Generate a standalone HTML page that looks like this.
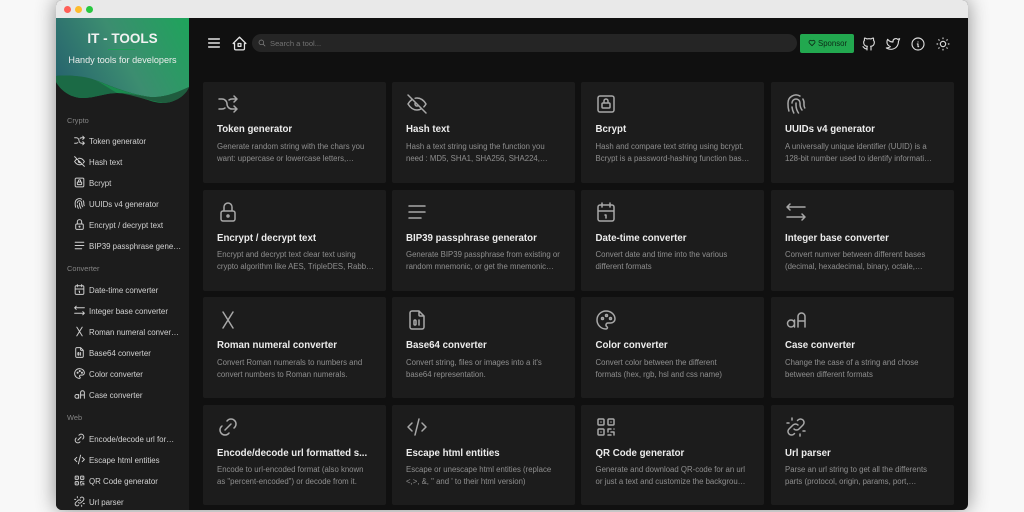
<!DOCTYPE html>
<html lang="en"><head><meta charset="utf-8"><title>IT - TOOLS</title>
<style>
html,body{margin:0;padding:0;width:1024px;height:512px;overflow:hidden;background:#f8f8f8;font-family:"Liberation Sans",sans-serif}
#w{position:absolute;left:56px;top:0;width:912px;height:510px;border-radius:6px;overflow:hidden;background:#101010;box-shadow:0 0 20px rgba(0,0,0,.45)}
#bar{position:absolute;left:56px;top:0;width:912px;height:18px;background:#e9e9e9;border-radius:6px 6px 0 0}
.dot{position:absolute;top:5.5px;width:7px;height:7px;border-radius:50%}
#side{position:absolute;left:56px;top:18px;width:133px;height:492px;background:#1c1c1c;border-radius:0 0 0 6px}
.a{position:absolute;white-space:nowrap;height:12px;line-height:12px}
.l{left:67px;font-size:7.4px;color:#848484;margin-top:.5px}
.n{left:89px;font-size:7.9px;color:#d2d2d2}
.t{font-size:9.7px;font-weight:700;color:#ececec;margin-top:1.2px}
.d{font-size:7.8px;color:#8f8f8f;margin-top:.8px}
.card{position:absolute;width:183px;background:#1c1c1c;border-radius:2px}
svg.i{position:absolute;fill:none;stroke:#a8a8a8;stroke-width:1.5;stroke-linecap:round;stroke-linejoin:round;overflow:visible}
svg.s{width:13px;height:13px;left:73px;stroke:#cfcfcf;stroke-width:1.8;margin-top:-.2px}
svg.b{width:24px;height:24px}
svg.h{width:16px;height:16px;top:35.5px;stroke:#dcdcdc;stroke-width:1.7}
</style></head><body>
<svg width="0" height="0" style="position:absolute"><defs>
<symbol id="shuffle" viewBox="0 0 24 24"><path d="M18 4l3 3l-3 3M18 20l3 -3l-3 -3M3 7h3a5 5 0 0 1 5 5a5 5 0 0 0 5 5h5M21 7h-5a4.98 4.98 0 0 0 -3 1m-4 8a4.98 4.98 0 0 1 -3 1h-3"/></symbol>
<symbol id="eyeoff" viewBox="0 0 24 24"><path d="M10.585 10.587a2 2 0 0 0 2.829 2.828M16.681 16.673a8.717 8.717 0 0 1 -4.681 1.327c-3.6 0 -6.6 -2 -9 -6c1.272 -2.12 2.712 -3.678 4.32 -4.674m2.86 -1.146a9.055 9.055 0 0 1 1.82 -.18c3.6 0 6.6 2 9 6c-.666 1.11 -1.379 2.067 -2.138 2.87M3 3l18 18"/></symbol>
<symbol id="locksq" viewBox="0 0 24 24"><path d="M8 12a1 1 0 0 1 1 -1h6a1 1 0 0 1 1 1v3a1 1 0 0 1 -1 1h-6a1 1 0 0 1 -1 -1zM10 11v-2a2 2 0 1 1 4 0v2M4 6a2 2 0 0 1 2 -2h12a2 2 0 0 1 2 2v12a2 2 0 0 1 -2 2h-12a2 2 0 0 1 -2 -2z"/></symbol>
<symbol id="finger" viewBox="0 0 24 24"><path d="M18.9 7a8 8 0 0 1 1.1 5v1a6 6 0 0 0 .8 3M8 11a4 4 0 0 1 8 0v1a10 10 0 0 0 2 6M12 11v2a14 14 0 0 0 2.5 8M8 15a18 18 0 0 0 1.8 6M4.9 19a22 22 0 0 1 -.9 -7v-1a8 8 0 0 1 12 -6.95"/></symbol>
<symbol id="lock" viewBox="0 0 24 24"><path d="M5 13a2 2 0 0 1 2 -2h10a2 2 0 0 1 2 2v6a2 2 0 0 1 -2 2h-10a2 2 0 0 1 -2 -2zM11 16a1 1 0 1 0 2 0a1 1 0 0 0 -2 0M8 11v-4a4 4 0 1 1 8 0v4"/></symbol>
<symbol id="align" viewBox="0 0 24 24"><path d="M4 6l16 0M4 12l16 0M4 18l12 0"/></symbol>
<symbol id="cal" viewBox="0 0 24 24"><path d="M4 7a2 2 0 0 1 2 -2h12a2 2 0 0 1 2 2v12a2 2 0 0 1 -2 2h-12a2 2 0 0 1 -2 -2zM16 3l0 4M8 3l0 4M4 11l16 0M11 15h1M12 15v3"/></symbol>
<symbol id="arrows" viewBox="0 0 24 24"><path d="M21 17l-18 0M6 10l-3 -3l3 -3M3 7l18 0M18 20l3 -3l-3 -3"/></symbol>
<symbol id="letterx" viewBox="0 0 24 24"><path d="M7 4l10 16M17 4l-10 16"/></symbol>
<symbol id="file" viewBox="0 0 24 24"><path d="M14 3v4a1 1 0 0 0 1 1h4M17 21h-10a2 2 0 0 1 -2 -2v-14a2 2 0 0 1 2 -2h7l5 5v11a2 2 0 0 1 -2 2zM9 13a1 1 0 0 1 1 -1h0a1 1 0 0 1 1 1v3a1 1 0 0 1 -1 1h0a1 1 0 0 1 -1 -1zM14 12v5"/></symbol>
<symbol id="palette" viewBox="0 0 24 24"><path d="M12 21a9 9 0 0 1 0 -18c4.97 0 9 3.582 9 8c0 1.06 -.474 2.078 -1.318 2.828c-.844 .75 -1.989 1.172 -3.182 1.172h-2.5a2 2 0 0 0 -1 3.75a1.3 1.3 0 0 1 -1 2.25M7.5 10.5a1 1 0 1 0 2 0a1 1 0 1 0 -2 0M11.5 7.5a1 1 0 1 0 2 0a1 1 0 1 0 -2 0M15.5 10.5a1 1 0 1 0 2 0a1 1 0 1 0 -2 0"/></symbol>
<symbol id="case" viewBox="0 0 24 24"><path d="M3.5 15.5a3.5 3.5 0 1 0 7 0a3.5 3.5 0 1 0 -7 0M10.5 12v7M14 19v-10.5a3.5 3.5 0 0 1 7 0v10.5M14 13h7"/></symbol>
<symbol id="link" viewBox="0 0 24 24"><path d="M9 15l6 -6M11 6l.463 -.536a5 5 0 0 1 7.071 7.072l-.534 .464M13 18l-.397 .534a5.068 5.068 0 0 1 -7.127 0a4.972 4.972 0 0 1 0 -7.071l.524 -.463"/></symbol>
<symbol id="code" viewBox="0 0 24 24"><path d="M7 8l-4 4l4 4M17 8l4 4l-4 4M14 4l-4 16"/></symbol>
<symbol id="qr" viewBox="0 0 24 24"><path d="M4 5a1 1 0 0 1 1 -1h4a1 1 0 0 1 1 1v4a1 1 0 0 1 -1 1h-4a1 1 0 0 1 -1 -1zM7 17l0 .01M14 5a1 1 0 0 1 1 -1h4a1 1 0 0 1 1 1v4a1 1 0 0 1 -1 1h-4a1 1 0 0 1 -1 -1zM7 7l0 .01M4 15a1 1 0 0 1 1 -1h4a1 1 0 0 1 1 1v4a1 1 0 0 1 -1 1h-4a1 1 0 0 1 -1 -1zM17 7l0 .01M14 14l3 0M20 14l0 .01M14 14l0 3M14 20l3 0M17 17l3 0M20 17l0 3"/></symbol>
<symbol id="unlink" viewBox="0 0 24 24"><path d="M10 14a3.5 3.5 0 0 0 5 0l4 -4a3.5 3.5 0 0 0 -5 -5l-.5 .5M14 10a3.5 3.5 0 0 0 -5 0l-4 4a3.5 3.5 0 0 0 5 5l.5 -.5M16 21v-2M19 16h2M3 8h2M8 3v2"/></symbol>
</defs></svg>

<div id="w"></div>
<div id="bar"></div>
<div class="dot" style="left:63.5px;background:#ff5f57"></div>
<div class="dot" style="left:74.5px;background:#febc2e"></div>
<div class="dot" style="left:85.5px;background:#28c840"></div>

<div id="side"></div>
<svg style="position:absolute;left:56px;top:18px" width="133" height="90" viewBox="56 18 133 90">
<defs><linearGradient id="g" gradientUnits="userSpaceOnUse" x1="56" y1="90" x2="189" y2="18"><stop offset="0" stop-color="#25606e"/><stop offset=".5" stop-color="#3c8d70"/><stop offset="1" stop-color="#1ea45b"/></linearGradient></defs>
<path d="M56 18H189V87C178 92 165 98 150 97C135 95 120 90 103 83C85 76 70 75 56 76Z" fill="url(#g)"/>
<path d="M56 76C70 75 85 76 103 83C120 90 135 95 150 97C165 98 178 92 189 87C186 95 175 103 163 103C150 103 135 93 117 93C105 93 95 98 83 98C72 98 62 92 56 82Z" fill="#1a8a4e"/>
<path d="M56 76C70 75 85 76 95 80C103 84 110 89 117 93C105 93 95 98 83 98C72 98 62 92 56 82Z" fill="#1b6a45"/>
<path d="M189 87C178 92 165 98 150 97C140 96 130 93 117 93C130 94 145 100 163 103C175 103 186 95 189 87Z" fill="#1f5c3e"/>
</svg>
<div class="a" style="left:56px;width:133px;top:30.5px;height:16px;line-height:16px;text-align:center;font-size:13.5px;font-weight:700;color:#f2f2f2">IT - TOOLS</div>
<div style="position:absolute;left:108px;top:49px;width:27px;height:1px;background:#1f9e57"></div>
<div class="a" style="left:56px;width:133px;top:53.5px;text-align:center;font-size:9.1px;color:#ededed">Handy tools for developers</div>

<div class="a l" style="top:114px">Crypto</div>
<svg class="i s" style="top:134.5px"><use href="#shuffle"/></svg><div class="a n" style="top:135.5px">Token generator</div>
<svg class="i s" style="top:155.5px"><use href="#eyeoff"/></svg><div class="a n" style="top:156.5px">Hash text</div>
<svg class="i s" style="top:176.5px"><use href="#locksq"/></svg><div class="a n" style="top:177.5px">Bcrypt</div>
<svg class="i s" style="top:197.5px"><use href="#finger"/></svg><div class="a n" style="top:198.5px">UUIDs v4 generator</div>
<svg class="i s" style="top:218.5px"><use href="#lock"/></svg><div class="a n" style="top:219.5px">Encrypt / decrypt text</div>
<svg class="i s" style="top:239.5px"><use href="#align"/></svg><div class="a n" style="top:240.5px">BIP39 passphrase gene…</div>
<div class="a l" style="top:262.5px">Converter</div>
<svg class="i s" style="top:283.5px"><use href="#cal"/></svg><div class="a n" style="top:284.5px">Date-time converter</div>
<svg class="i s" style="top:304.5px"><use href="#arrows"/></svg><div class="a n" style="top:305.5px">Integer base converter</div>
<svg class="i s" style="top:325.5px"><use href="#letterx"/></svg><div class="a n" style="top:326.5px">Roman numeral conver…</div>
<svg class="i s" style="top:346.5px"><use href="#file"/></svg><div class="a n" style="top:347.5px">Base64 converter</div>
<svg class="i s" style="top:367.5px"><use href="#palette"/></svg><div class="a n" style="top:368.5px">Color converter</div>
<svg class="i s" style="top:388.5px"><use href="#case"/></svg><div class="a n" style="top:389.5px">Case converter</div>
<div class="a l" style="top:411px">Web</div>
<svg class="i s" style="top:432.5px"><use href="#link"/></svg><div class="a n" style="top:433.5px">Encode/decode url for…</div>
<svg class="i s" style="top:453.5px"><use href="#code"/></svg><div class="a n" style="top:454.5px">Escape html entities</div>
<svg class="i s" style="top:474.5px"><use href="#qr"/></svg><div class="a n" style="top:475.5px">QR Code generator</div>
<svg class="i s" style="top:495.5px"><use href="#unlink"/></svg><div class="a n" style="top:496.5px">Url parser</div>

<svg class="i" viewBox="0 0 24 24" style="left:206px;top:35px;width:16px;height:16px;stroke:#e4e4e4;stroke-width:2.1"><path d="M4 6l16 0M4 12l16 0M4 18l16 0"/></svg>
<svg class="i" viewBox="0 0 24 24" style="left:230.5px;top:34.5px;width:17px;height:17px;stroke:#e4e4e4;stroke-width:1.8"><path d="M5 12l-2 0l9 -9l9 9l-2 0M5 12v7a2 2 0 0 0 2 2h10a2 2 0 0 0 2 -2v-7M10 12h4v4h-4z"/></svg>
<div style="position:absolute;left:252px;top:34px;width:545px;height:18px;border-radius:9px;background:#252525"></div>
<svg class="i" viewBox="0 0 24 24" style="left:258px;top:39px;width:8px;height:8px;stroke:#8a8a8a;stroke-width:2"><path d="M3 10a7 7 0 1 0 14 0a7 7 0 1 0 -14 0M21 21l-6 -6"/></svg>
<div class="a" style="left:270px;top:37.5px;font-size:7.6px;color:#727272">Search a tool...</div>
<div style="position:absolute;left:799.5px;top:34px;width:54.5px;height:18.5px;border-radius:2px;background:#22a84f"></div>
<svg class="i" viewBox="0 0 24 24" style="left:807.5px;top:39px;width:8px;height:8px;stroke:#0d2a17;stroke-width:2.4"><path d="M19.5 12.572l-7.5 7.428l-7.5 -7.428a5 5 0 1 1 7.5 -6.566a5 5 0 1 1 7.5 6.572"/></svg>
<div class="a" style="left:818px;top:37.5px;font-size:7.8px;color:#0d2a17">Sponsor</div>
<svg class="i h" viewBox="0 0 24 24" style="left:860.5px"><path d="M9 19c-4.3 1.4 -4.3 -2.5 -6 -3m12 5v-3.5c0 -1 .1 -1.4 -.5 -2c2.8 -.3 5.5 -1.4 5.5 -6a4.6 4.6 0 0 0 -1.3 -3.2a4.2 4.2 0 0 0 -.1 -3.2s-1.1 -.3 -3.5 1.3a12.3 12.3 0 0 0 -6.2 0c-2.4 -1.6 -3.5 -1.3 -3.5 -1.3a4.2 4.2 0 0 0 -.1 3.2a4.6 4.6 0 0 0 -1.3 3.2c0 4.6 2.7 5.7 5.5 6c-.6 .6 -.6 1.2 -.5 2v3.5"/></svg>
<svg class="i h" viewBox="0 0 24 24" style="left:885px"><path d="M22 4.01c-1 .49 -1.98 .689 -3 .99c-1.121 -1.265 -2.783 -1.335 -4.38 -.737s-2.643 2.06 -2.62 3.737v1c-3.245 .083 -6.135 -1.395 -8 -4c0 0 -4.182 7.433 4 11c-1.872 1.247 -3.739 2.088 -6 2c3.308 1.803 6.913 2.423 10.034 1.517c3.58 -1.04 6.522 -3.723 7.651 -7.742a13.84 13.84 0 0 0 .497 -3.753c0 -.249 1.51 -2.772 1.818 -4.013z"/></svg>
<svg class="i h" viewBox="0 0 24 24" style="left:910px"><path d="M3 12a9 9 0 1 0 18 0a9 9 0 0 0 -18 0M12 9h.01M11 12h1v4h1"/></svg>
<svg class="i h" viewBox="0 0 24 24" style="left:934.5px"><path d="M8 12a4 4 0 1 0 8 0a4 4 0 1 0 -8 0M3 12h1M12 3v1M20 12h1M12 20v1M5.6 5.6l.7 .7M18.4 5.6l-.7 .7M17.7 17.7l.7 .7M6.3 17.7l-.7 .7"/></svg>

<div class="card" style="left:203px;top:82px;height:101px"></div>
<div class="card" style="left:392px;top:82px;height:101px"></div>
<div class="card" style="left:581px;top:82px;height:101px"></div>
<div class="card" style="left:771px;top:82px;height:101px"></div>
<div class="card" style="left:203px;top:190px;height:101px"></div>
<div class="card" style="left:392px;top:190px;height:101px"></div>
<div class="card" style="left:581px;top:190px;height:101px"></div>
<div class="card" style="left:771px;top:190px;height:101px"></div>
<div class="card" style="left:203px;top:297px;height:101px"></div>
<div class="card" style="left:392px;top:297px;height:101px"></div>
<div class="card" style="left:581px;top:297px;height:101px"></div>
<div class="card" style="left:771px;top:297px;height:101px"></div>
<div class="card" style="left:203px;top:405px;height:100px"></div>
<div class="card" style="left:392px;top:405px;height:100px"></div>
<div class="card" style="left:581px;top:405px;height:100px"></div>
<div class="card" style="left:771px;top:405px;height:100px"></div>

<svg class="i b" style="left:215.5px;top:92px"><use href="#shuffle"/></svg>
<div class="a t" style="left:217px;top:123px">Token generator</div>
<div class="a d" style="left:217px;top:140px">Generate random string with the chars you</div>
<div class="a d" style="left:217px;top:152.5px">want: uppercase or lowercase letters,…</div>
<svg class="i b" style="left:405px;top:92px"><use href="#eyeoff"/></svg>
<div class="a t" style="left:406px;top:123px">Hash text</div>
<div class="a d" style="left:406px;top:140px">Hash a text string using the function you</div>
<div class="a d" style="left:406px;top:152.5px">need : MD5, SHA1, SHA256, SHA224,…</div>
<svg class="i b" style="left:594px;top:92px"><use href="#locksq"/></svg>
<div class="a t" style="left:595.5px;top:123px">Bcrypt</div>
<div class="a d" style="left:595.5px;top:140px">Hash and compare text string using bcrypt.</div>
<div class="a d" style="left:595.5px;top:152.5px">Bcrypt is a password-hashing function bas…</div>
<svg class="i b" style="left:783.5px;top:92px"><use href="#finger"/></svg>
<div class="a t" style="left:785px;top:123px">UUIDs v4 generator</div>
<div class="a d" style="left:785px;top:140px">A universally unique identifier (UUID) is a</div>
<div class="a d" style="left:785px;top:152.5px">128-bit number used to identify informati…</div>

<svg class="i b" style="left:215.5px;top:200px"><use href="#lock"/></svg>
<div class="a t" style="left:217px;top:231.5px">Encrypt / decrypt text</div>
<div class="a d" style="left:217px;top:248px">Encrypt and decrypt text clear text using</div>
<div class="a d" style="left:217px;top:260.5px">crypto algorithm like AES, TripleDES, Rabb…</div>
<svg class="i b" style="left:405px;top:200px"><use href="#align"/></svg>
<div class="a t" style="left:406px;top:231.5px">BIP39 passphrase generator</div>
<div class="a d" style="left:406px;top:248px">Generate BIP39 passphrase from existing or</div>
<div class="a d" style="left:406px;top:260.5px">random mnemonic, or get the mnemonic…</div>
<svg class="i b" style="left:594px;top:200px"><use href="#cal"/></svg>
<div class="a t" style="left:595.5px;top:231.5px">Date-time converter</div>
<div class="a d" style="left:595.5px;top:248px">Convert date and time into the various</div>
<div class="a d" style="left:595.5px;top:260.5px">different formats</div>
<svg class="i b" style="left:783.5px;top:200px"><use href="#arrows"/></svg>
<div class="a t" style="left:785px;top:231.5px">Integer base converter</div>
<div class="a d" style="left:785px;top:248px">Convert numver between different bases</div>
<div class="a d" style="left:785px;top:260.5px">(decimal, hexadecimal, binary, octale,…</div>

<svg class="i b" style="left:215.5px;top:308px"><use href="#letterx"/></svg>
<div class="a t" style="left:217px;top:339px">Roman numeral converter</div>
<div class="a d" style="left:217px;top:356px">Convert Roman numerals to numbers and</div>
<div class="a d" style="left:217px;top:368px">convert numbers to Roman numerals.</div>
<svg class="i b" style="left:405px;top:308px"><use href="#file"/></svg>
<div class="a t" style="left:406px;top:339px">Base64 converter</div>
<div class="a d" style="left:406px;top:356px">Convert string, files or images into a it's</div>
<div class="a d" style="left:406px;top:368px">base64 representation.</div>
<svg class="i b" style="left:594px;top:308px"><use href="#palette"/></svg>
<div class="a t" style="left:595.5px;top:339px">Color converter</div>
<div class="a d" style="left:595.5px;top:356px">Convert color between the different</div>
<div class="a d" style="left:595.5px;top:368px">formats (hex, rgb, hsl and css name)</div>
<svg class="i b" style="left:783.5px;top:308px"><use href="#case"/></svg>
<div class="a t" style="left:785px;top:339px">Case converter</div>
<div class="a d" style="left:785px;top:356px">Change the case of a string and chose</div>
<div class="a d" style="left:785px;top:368px">between different formats</div>

<svg class="i b" style="left:215.5px;top:415px"><use href="#link"/></svg>
<div class="a t" style="left:217px;top:446.5px">Encode/decode url formatted s...</div>
<div class="a d" style="left:217px;top:463px">Encode to url-encoded format (also known</div>
<div class="a d" style="left:217px;top:475.5px">as "percent-encoded") or decode from it.</div>
<svg class="i b" style="left:405px;top:415px"><use href="#code"/></svg>
<div class="a t" style="left:406px;top:446.5px">Escape html entities</div>
<div class="a d" style="left:406px;top:463px">Escape or unescape html entities (replace</div>
<div class="a d" style="left:406px;top:475.5px">&lt;,&gt;, &amp;, " and ' to their html version)</div>
<svg class="i b" style="left:594px;top:415px"><use href="#qr"/></svg>
<div class="a t" style="left:595.5px;top:446.5px">QR Code generator</div>
<div class="a d" style="left:595.5px;top:463px">Generate and download QR-code for an url</div>
<div class="a d" style="left:595.5px;top:475.5px">or just a text and customize the backgrou…</div>
<svg class="i b" style="left:783.5px;top:415px"><use href="#unlink"/></svg>
<div class="a t" style="left:785px;top:446.5px">Url parser</div>
<div class="a d" style="left:785px;top:463px">Parse an url string to get all the differents</div>
<div class="a d" style="left:785px;top:475.5px">parts (protocol, origin, params, port,…</div>
</body></html>
